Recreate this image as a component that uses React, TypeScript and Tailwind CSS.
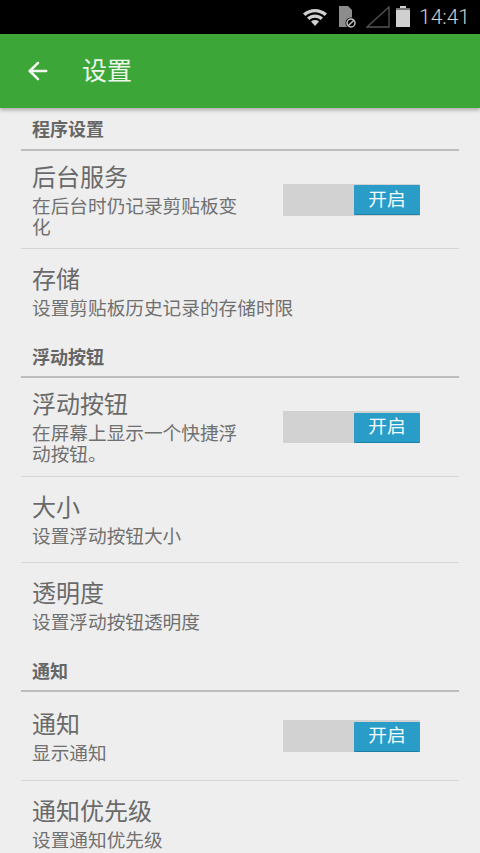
import React from "react";
import { ArrowLeft } from "lucide-react";

const font = { fontFamily: '"Roboto", "Noto Sans CJK SC", sans-serif' };

const StatusBar = () => (
  <div className="flex h-[34px] shrink-0 items-center justify-end bg-black pr-[10px] text-[#d0d0d0]">
    <svg width="26" height="20" viewBox="0 0 26 20" className="mr-[10px]">
      <path d="M1 6.5 C8 0.5 18 0.5 25 6.5 L22.6 9 C16.5 4 9.5 4 3.4 9 Z" fill="#d0d0d0" />
      <path d="M5 10.5 C10 6.5 16 6.5 21 10.5 L18.7 13 C15 10 11 10 7.3 13 Z" fill="#d0d0d0" />
      <path d="M9 14.5 C11.5 12.6 14.5 12.6 17 14.5 L13 19 Z" fill="#d0d0d0" />
    </svg>
    <svg width="20" height="24" viewBox="0 0 20 24" className="mr-[8px]">
      <path d="M1 1 H10 L14 5 V22 H1 Z" fill="#8c8c8c" />
      <circle cx="13" cy="18" r="5.5" fill="#000" />
      <circle cx="13" cy="18" r="4" fill="none" stroke="#c4c4c4" strokeWidth="1.5" />
      <path d="M10.2 20.8 L15.8 15.2" stroke="#c4c4c4" strokeWidth="1.5" />
    </svg>
    <svg width="24" height="22" viewBox="0 0 24 22" className="mr-[6px]">
      <path d="M1 21 L23 1 V21 Z" fill="none" stroke="#555" strokeWidth="1.3" />
    </svg>
    <svg width="14" height="22" viewBox="0 0 14 22" className="mr-[9px]">
      <path d="M4 0 H10 V2 H14 V21 H0 V2 H4 Z" fill="#d0d0d0" />
      <rect x="0" y="2" width="14" height="2" fill="#777" />
    </svg>
    <span className="text-[21px] font-light leading-none" style={{ fontFamily: '"Roboto", sans-serif' }}>14:41</span>
  </div>
);

const AppBar = () => (
  <div className="relative z-10 flex h-[74px] shrink-0 items-center bg-[#3ca639] pl-[24px] text-white shadow-[0_2px_4px_rgba(0,0,0,0.3)]">
    <ArrowLeft size={28} strokeWidth={2.2} className="text-[#f2f7f0]" />
    <span className="ml-[30px] text-[25px] leading-none text-[#eef6ec]">设置</span>
  </div>
);

const SectionHeader = ({ title, first }: { title: string; first?: boolean }) => (
  <div className={first ? "mx-[21px] h-[43px] shrink-0 border-b-2 border-[#bdbdbd] pt-[10px]" : "mx-[21px] h-[43px] shrink-0 border-b-2 border-[#bdbdbd] pt-[11px]"}>
    <div className="pl-[11px] text-[18px] font-bold leading-[24px] text-[#666666]">{title}</div>
  </div>
);

const Switch = () => (
  <div className="flex h-[32px] w-[137px] shrink-0 items-center justify-end bg-[#d2d2d2]">
    <div className="flex h-[29px] w-[66px] items-center justify-center rounded-[1px] bg-[#2a9cc8] text-[18.67px] text-[#f4fbfd] shadow-[0_1px_0_#1f7fa6]">
      开启
    </div>
  </div>
);

type RowProps = { title: string; sub: string; height: string; toggle?: boolean; divider?: boolean };

const Row = ({ title, sub, height, toggle, divider }: RowProps) => (
  <div className={`mx-[21px] flex shrink-0 pl-[11px] ${height} ${toggle ? "items-center" : "items-start"} ${divider ? "border-b border-[#d4d4d4]" : ""}`}>
    <div className={toggle ? "w-[215px] shrink-0 pt-[1px]" : "pt-[15px]"}>
      <div className="text-[24px] leading-[32px] text-[#6a6a6a]">{title}</div>
      <div className="mt-[3px] text-[18.67px] leading-[21px] text-[#707070]">{sub}</div>
    </div>
    {toggle && (
      <div className="ml-[36px]">
        <Switch />
      </div>
    )}
  </div>
);

export default function App() {
  return (
    <div className="flex h-[853px] w-[480px] flex-col overflow-hidden bg-[#eeeeee]" style={font}>
      <StatusBar />
      <AppBar />
      <SectionHeader title="程序设置" first />
      <Row title="后台服务" sub="在后台时仍记录剪贴板变化" height="h-[98px]" toggle divider />
      <Row title="存储" sub="设置剪贴板历史记录的存储时限" height="h-[86px]" />
      <SectionHeader title="浮动按钮" />
      <Row title="浮动按钮" sub="在屏幕上显示一个快捷浮动按钮。" height="h-[99px]" toggle divider />
      <Row title="大小" sub="设置浮动按钮大小" height="h-[86px]" divider />
      <Row title="透明度" sub="设置浮动按钮透明度" height="h-[86px]" />
      <SectionHeader title="通知" />
      <Row title="通知" sub="显示通知" height="h-[89px]" toggle divider />
      <Row title="通知优先级" sub="设置通知优先级" height="h-[86px]" />
    </div>
  );
}
